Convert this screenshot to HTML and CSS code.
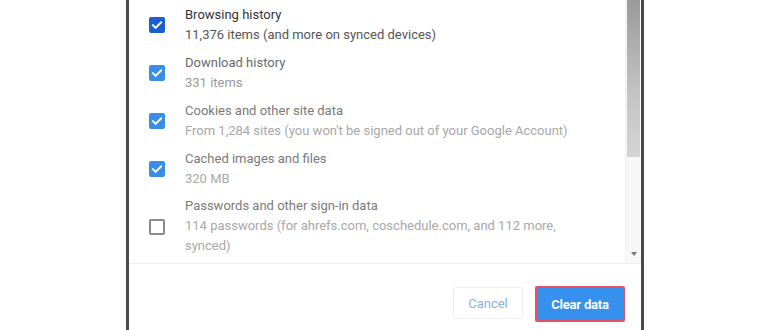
FILE: index.html
```html
<!DOCTYPE html>
<html>
<head>
<meta charset="utf-8">
<link rel="stylesheet" href="styles.css">
</head>
<body>
<div class="dialog">
  <div class="scroller">
    <div class="list">
      <div class="row active">
        <span class="cb on dark"><svg viewBox="0 0 16 16"><path d="M4 8.3l2.6 2.6L12 5.5" /></svg></span>
        <div class="txt">
          <div class="title">Browsing history</div>
          <div class="sub">11,376 items (and more on synced devices)</div>
        </div>
      </div>
      <div class="row mid">
        <span class="cb on"><svg viewBox="0 0 16 16"><path d="M4 8.3l2.6 2.6L12 5.5" /></svg></span>
        <div class="txt">
          <div class="title">Download history</div>
          <div class="sub">331 items</div>
        </div>
      </div>
      <div class="row">
        <span class="cb on"><svg viewBox="0 0 16 16"><path d="M4 8.3l2.6 2.6L12 5.5" /></svg></span>
        <div class="txt">
          <div class="title">Cookies and other site data</div>
          <div class="sub">From 1,284 sites (you won't be signed out of your Google Account)</div>
        </div>
      </div>
      <div class="row">
        <span class="cb on"><svg viewBox="0 0 16 16"><path d="M4 8.3l2.6 2.6L12 5.5" /></svg></span>
        <div class="txt">
          <div class="title">Cached images and files</div>
          <div class="sub">320 MB</div>
        </div>
      </div>
      <div class="row last">
        <span class="cb off"></span>
        <div class="txt">
          <div class="title">Passwords and other sign-in data</div>
          <div class="sub">114 passwords (for ahrefs.com, coschedule.com, and 112 more, synced)</div>
        </div>
      </div>
    </div>
    <div class="scrollbar">
      <div class="thumb"></div>
      <div class="track"></div>
      <div class="arrow"></div>
    </div>
  </div>
  <div class="footer">
    <button class="btn cancel">Cancel</button>
    <button class="btn primary">Clear data</button>
  </div>
</div>
</body>
</html>
```
FILE: styles.css
```css
html, body {
  margin: 0;
  padding: 0;
  background: #ffffff;
  height: 330px;
  overflow: hidden;
}
body {
  font-family: Roboto, "Liberation Sans", sans-serif;
  font-size: 13px;
}
.dialog {
  margin-left: 126px;
  width: 512px;
  height: 330px;
  border-left: 3px solid #4a4a4a;
  border-right: 3px solid #4a4a4a;
  background: #fff;
  display: flex;
  flex-direction: column;
}
.scroller {
  display: flex;
  height: 263px;
  border-bottom: 1px solid #eeeeee;
}
.list {
  flex: 1;
  padding-left: 20px;
}
.row {
  display: flex;
  align-items: center;
  height: 48px;
  padding-top: 1px;
  box-sizing: border-box;
}
.row.last {
  height: 70px;
  padding-top: 0;
  align-items: flex-start;
  padding-top: 4px;
}
.row.last .cb {
  margin-top: 23px;
}
.cb {
  width: 16px;
  height: 16px;
  border-radius: 2px;
  flex: none;
  margin-right: 20px;
  box-sizing: border-box;
  display: flex;
  margin-top: 1px;
}
.cb.on { background: #3c8ee4; }
.cb.dark { background: #1d5fcf; }
.cb svg { width: 16px; height: 16px; }
.cb path {
  fill: none;
  stroke: #fff;
  stroke-width: 2;
  stroke-linecap: square;
}
.cb.off {
  border: 2px solid #8a8a8a;
  width: 16px;
  height: 16px;
}
.txt {
  width: 400px;
  line-height: 20px;
}
.title { color: #7a7a7a; }
.sub { color: #a8a8a8; }
.row.active .title { color: #333333; }
.row.active .sub { color: #555555; }
.row.mid .title { color: #6a6a6a; }
.row.mid .sub { color: #9a9a9a; }
.scrollbar {
  width: 15px;
  flex: none;
  background: #f7f7f7;
  border-left: 1px solid #f0f0f0;
  display: flex;
  flex-direction: column;
  align-items: center;
}
.thumb {
  width: 13px;
  height: 157px;
  background: linear-gradient(#9a9a9a, #c4c4c4 60%, #d4d4d4);
}
.track { flex: 1; }
.arrow {
  width: 0;
  height: 0;
  border-left: 3.5px solid transparent;
  border-right: 3.5px solid transparent;
  border-top: 4px solid #777;
  margin-bottom: 7px;
}
.footer {
  display: flex;
  justify-content: flex-end;
  align-items: flex-start;
  gap: 12px;
  padding: 22px 16px 0 0;
}
.btn {
  font-family: Roboto, "Liberation Sans", sans-serif;
  font-size: 13px;
  height: 32px;
  border-radius: 3px;
  cursor: pointer;
}
.cancel {
  margin-top: 1px;
  width: 70px;
  background: #fff;
  color: #8ab2dc;
  border: 1px solid #eeeeee;
}
.primary {
  width: 90px;
  height: 36px;
  background: #3590ee;
  color: #fff;
  font-weight: bold;
  border: 2px solid #e8505f;
  border-radius: 2px;
  letter-spacing: -0.2px;
}
```
